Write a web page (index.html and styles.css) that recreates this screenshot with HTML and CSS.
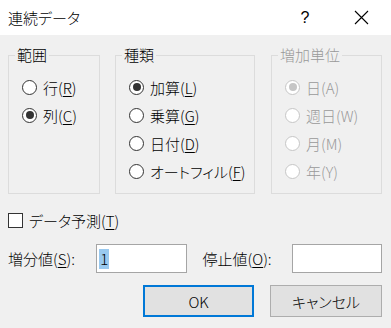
FILE: index.html
```html
<!DOCTYPE html>
<html lang="ja">
<head>
    <meta charset="UTF-8">
    <title>連続データ</title>
    <link rel="stylesheet" href="styles.css">
</head>
<body>
    <div class="dialog">
        <div class="titlebar">
            <span class="title">連続データ</span>
            <span class="help">?</span>
            <span class="close">
                <svg width="15" height="15" viewBox="0 0 15 15">
                    <path d="M1 1 L14 14 M14 1 L1 14" stroke="#000" stroke-width="1.1" fill="none"/>
                </svg>
            </span>
        </div>
        <div class="content">
            <div class="groups">
                <fieldset class="group range">
                    <legend>範囲</legend>
                    <div class="radio"><span class="mark"></span>行(<u>R</u>)</div>
                    <div class="radio"><span class="mark checked"></span>列(<u>C</u>)</div>
                </fieldset>
                <fieldset class="group kind">
                    <legend>種類</legend>
                    <div class="radio"><span class="mark checked"></span>加算(<u>L</u>)</div>
                    <div class="radio"><span class="mark"></span>乗算(<u>G</u>)</div>
                    <div class="radio"><span class="mark"></span>日付(<u>D</u>)</div>
                    <div class="radio"><span class="mark"></span>オートフィル(<u>F</u>)</div>
                </fieldset>
                <fieldset class="group unit disabled">
                    <legend>増加単位</legend>
                    <div class="radio"><span class="mark checked"></span>日(A)</div>
                    <div class="radio"><span class="mark"></span>週日(W)</div>
                    <div class="radio"><span class="mark"></span>月(M)</div>
                    <div class="radio"><span class="mark"></span>年(Y)</div>
                </fieldset>
            </div>
            <div class="check"><span class="box"></span>データ予測(<u>T</u>)</div>
            <div class="values">
                <span class="field-label">増分値(<u>S</u>):</span>
                <span class="input"><span class="sel">1</span></span>
                <span class="field-label stop">停止値(<u>O</u>):</span>
                <span class="input"></span>
            </div>
            <div class="buttons">
                <button class="btn default">OK</button>
                <button class="btn">キャンセル</button>
            </div>
        </div>
    </div>
</body>
</html>
```

FILE: styles.css
```css
* {
    box-sizing: border-box;
}
html, body {
    margin: 0;
    padding: 0;
}
body {
    width: 391px;
    height: 328px;
    background-color: #f0f0f0;
    font-family: "Noto Sans CJK JP", "Noto Sans", sans-serif;
    font-feature-settings: "palt";
    font-size: 15px;
    font-weight: 300;
    color: #000;
    overflow: hidden;
}
u {
    text-underline-offset: 2px;
    text-decoration-thickness: 1px;
}
.titlebar {
    height: 35px;
    background-color: #fff;
    display: flex;
    align-items: center;
    padding: 0 15px 0 8px;
}
.title {
    flex: 1;
    line-height: 20px;
}
.help {
    width: 20px;
    margin-right: 31px;
    text-align: center;
    font-family: "Liberation Sans", sans-serif;
    font-size: 16px;
}
.close {
    width: 30px;
    display: flex;
    justify-content: center;
}
.content {
    padding: 10px 9px 0 8px;
}
.groups {
    display: flex;
}
.group {
    margin: 0;
    padding: 8px 0 8px 0;
    border: 1px solid #dcdcdc;
    height: 149px;
}
.group legend {
    margin-left: 6px;
    padding: 0 2px;
    line-height: 20px;
}
.range {
    width: 92px;
    margin-right: 15px;
}
.kind {
    width: 140px;
    margin-right: 16px;
}
.unit {
    width: 111px;
}
.radio {
    height: 28px;
    display: flex;
    align-items: center;
    padding-left: 13px;
}
.mark {
    width: 15px;
    height: 15px;
    border: 1px solid #333;
    border-radius: 50%;
    background-color: #fff;
    margin-right: 6px;
    display: flex;
    align-items: center;
    justify-content: center;
}
.mark.checked::after {
    content: "";
    width: 8px;
    height: 8px;
    border-radius: 50%;
    background-color: #333;
}
.disabled {
    color: #999;
}
.disabled .mark {
    border-color: #c6c6c6;
}
.disabled .mark.checked::after {
    background-color: #c6c6c6;
}
.check {
    margin-top: 12px;
    height: 28px;
    display: flex;
    align-items: center;
}
.box {
    width: 15px;
    height: 15px;
    border: 1px solid #333;
    background-color: #fff;
    margin-right: 6px;
}
.values {
    margin-top: 10px;
    height: 29px;
    display: flex;
    align-items: center;
}
.field-label {
    width: 89px;
}
.field-label.stop {
    width: 90px;
    margin-left: 16px;
}
.input {
    width: 91px;
    height: 29px;
    border: 1px solid #a5a5a5;
    background-color: #fff;
    padding-left: 2px;
    display: flex;
    align-items: center;
}
.sel {
    background-color: #99c9ef;
    line-height: 20px;
    padding: 0 1px;
}
.buttons {
    margin-top: 12px;
    display: flex;
    justify-content: flex-end;
}
.btn {
    height: 32px;
    width: 112px;
    background-color: #e1e1e1;
    border: 1px solid #adadad;
    font-family: inherit;
    font-feature-settings: "palt";
    font-size: 15px;
    font-weight: 300;
    color: #000;
    padding: 0;
}
.btn.default {
    width: 111px;
    margin-right: 16px;
    border: 2px solid #0078d7;
}
```
